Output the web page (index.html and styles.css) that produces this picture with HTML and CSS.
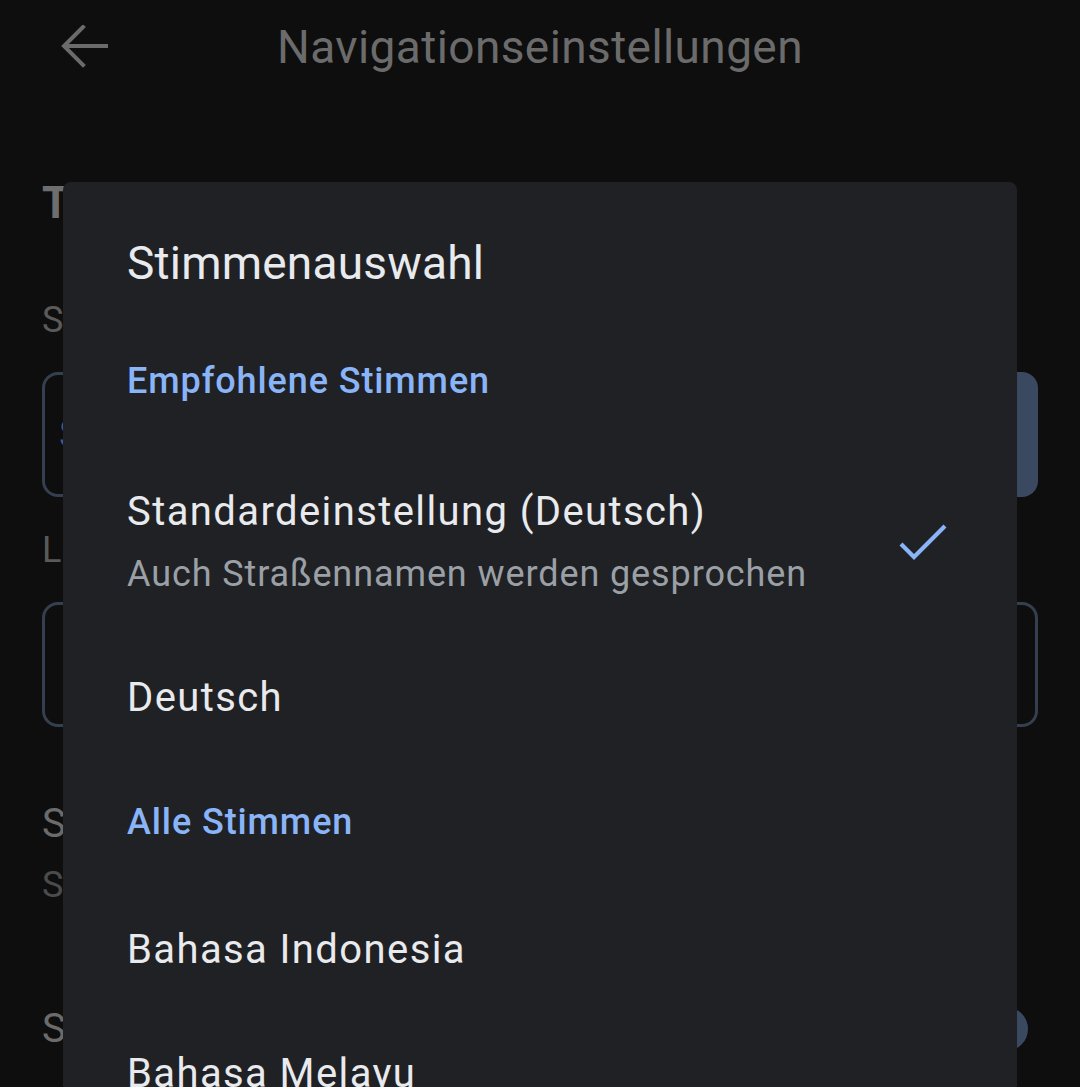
FILE: index.html
```html
<!DOCTYPE html>
<html lang="de">
<head>
<meta charset="utf-8">
<title>Navigationseinstellungen</title>
<link rel="stylesheet" href="styles.css">
</head>
<body>
<div class="screen">
  <header class="appbar">
    <div class="appbar-left">
      <svg class="back" width="48" height="44" viewBox="0 0 48 44" aria-hidden="true">
        <path d="M45 21H4 M22 2L3 21L22 40" fill="none" stroke="#6b6b6b" stroke-width="4" stroke-linecap="square" stroke-linejoin="miter"/>
      </svg>
    </div>
    <h1 class="appbar-title">Navigationseinstellungen</h1>
    <div class="appbar-right"></div>
  </header>

  <main class="settings">
    <h2 class="section-heading">Ton und Stimme</h2>
    <div class="field-label">Stimme</div>
    <div class="segmented">
      <div class="segment segment-outline"><span class="segment-text">Standard</span></div>
      <div class="segment segment-filled"></div>
    </div>
    <div class="field-label">Lautstärke</div>
    <div class="segmented">
      <div class="segment segment-outline segment-wide"></div>
    </div>
    <div class="setting">
      <div class="setting-title">Sprachansagen</div>
      <div class="setting-sub">Stummschalten</div>
    </div>
    <div class="setting setting-toggle">
      <div class="setting-title">Sprachausgabe über Bluetooth</div>
      <div class="toggle"><span class="thumb"></span></div>
    </div>
  </main>

  <section class="dialog">
    <div class="dialog-title">Stimmenauswahl</div>
    <div class="group-header gh-first">Empfohlene Stimmen</div>
    <div class="item item-selected">
      <div class="item-text">
        <div class="item-label">Standardeinstellung (Deutsch)</div>
        <div class="item-sub">Auch Straßennamen werden gesprochen</div>
      </div>
      <svg class="check" width="48" height="48" viewBox="0 0 48 48" aria-hidden="true">
        <path d="M2 26L15 39L46 8" fill="none" stroke="#8ab4f8" stroke-width="4.2"/>
      </svg>
    </div>
    <div class="item item-deutsch"><div class="item-label">Deutsch</div></div>
    <div class="group-header gh-all">Alle Stimmen</div>
    <div class="item item-bi"><div class="item-label">Bahasa Indonesia</div></div>
    <div class="item item-bm"><div class="item-label">Bahasa Melayu</div></div>
  </section>
</div>
</body>
</html>
```

FILE: styles.css
```css
html, body {
  margin: 0;
  padding: 0;
  background: #0e0e0e;
  height: 1087px;
  overflow: hidden;
}

.screen {
  position: relative;
  width: 1080px;
  height: 1087px;
  overflow: hidden;
  font-family: Roboto, "Noto Sans", sans-serif;
}

.appbar {
  display: grid;
  grid-template-columns: 1fr auto 1fr;
  align-items: center;
  height: 95px;
}

.appbar-left {
  padding-left: 61px;
  display: flex;
  align-items: center;
  height: 95px;
}

.back {
  display: block;
  margin-top: -2px;
}

.appbar-title {
  margin: 0;
  font-weight: 400;
  font-size: 46px;
  line-height: 95px;
  color: #6b6b6b;
  letter-spacing: 0.4px;
}

.settings {
  padding: 0 42px;
}

.section-heading {
  margin: 82px 0 0;
  font-size: 44px;
  line-height: 52px;
  font-weight: 700;
  color: #6e6e6e;
}

.field-label {
  margin-top: 69px;
  font-size: 36px;
  line-height: 44px;
  color: #5a5a5a;
}

.field-label + .segmented + .field-label {
  margin-top: 31px;
}

.segmented {
  display: flex;
  gap: 16px;
  margin-top: 30px;
  height: 125px;
}

.segment {
  flex: 1;
  box-sizing: border-box;
  border-radius: 16px;
  display: flex;
  align-items: center;
}

.segment-outline {
  border: 3px solid #34404f;
}

.segment-filled {
  background: #3b4960;
}

.segment-text {
  padding-left: 14px;
  font-size: 40px;
  color: #3e5b86;
}

.setting {
  margin-top: 73px;
}

.setting-title {
  font-size: 40px;
  line-height: 48px;
  color: #6b6b6b;
}

.setting-sub {
  margin-top: 15px;
  font-size: 36px;
  line-height: 44px;
  color: #4b4b4b;
}

.setting-toggle {
  margin-top: 98px;
  display: flex;
  justify-content: space-between;
  align-items: center;
}

.toggle {
  position: relative;
  width: 96px;
  height: 44px;
  margin-right: 10px;
  border-radius: 22px;
  background: #11151b;
}

.thumb {
  position: absolute;
  right: 0;
  top: 0;
  width: 44px;
  height: 44px;
  border-radius: 50%;
  background: #3b4960;
}

/* Dialog overlay */
.dialog {
  position: absolute;
  left: 63px;
  top: 182px;
  width: 954px;
  height: 1000px;
  box-sizing: border-box;
  background: #202124;
  border-radius: 8px 8px 0 0;
  padding: 53px 70px 0 64px;
  color: #e8eaed;
}

.dialog-title {
  font-size: 46px;
  line-height: 56px;
  color: #e8eaed;
  letter-spacing: 0.2px;
}

.group-header {
  font-size: 36px;
  line-height: 44px;
  font-weight: 500;
  color: #8ab4f8;
  letter-spacing: 0.9px;
}

.gh-first { margin-top: 68px; }
.gh-all { margin-top: 78px; }

.item {
  display: flex;
  justify-content: space-between;
  align-items: center;
}

.item-selected { margin-top: 85px; }
.item-deutsch { margin-top: 78px; }
.item-bi { margin-top: 82px; }
.item-bm { margin-top: 76px; }

.item-label {
  font-size: 40px;
  line-height: 48px;
  color: #e8eaed;
  letter-spacing: 1.4px;
}

.item-sub {
  margin-top: 16px;
  font-size: 36px;
  line-height: 44px;
  color: #9aa0a6;
  letter-spacing: 0.9px;
}

.check {
  display: block;
}
```
